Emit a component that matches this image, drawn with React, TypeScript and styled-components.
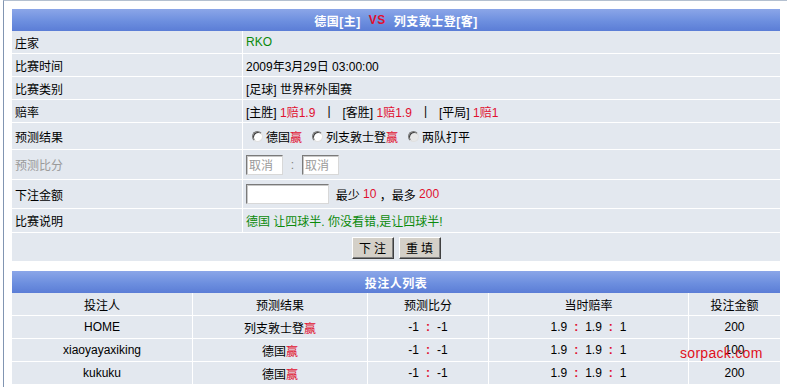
import React, { FC } from 'react';
import styled, { createGlobalStyle } from 'styled-components';

const GlobalStyle = createGlobalStyle`
  body {
    margin: 0;
    background: #fff;
    font-family: 'Liberation Sans', 'Noto Sans CJK SC', sans-serif;
    font-size: 12px;
    color: #000;
  }
`;

const Colors = {
  Cell: '#e3e8ef',
  Red: '#e0102f',
  Green: '#0b8a0b',
  Muted: '#9a9a9a',
};

const Frame = styled.div`
  position: relative;
  margin-left: 3px;
  min-height: 386px;
  border-left: 1px solid #8195b2;
  border-top: 1px solid #b4c0d0;
  padding: 8px 0 0 8px;
`;

const Panel = styled.div`
  width: 768px;
  background: #fff;
`;

const Header = styled.div<{ $h: number }>`
  height: ${({ $h }) => $h}px;
  display: flex;
  align-items: center;
  justify-content: center;
  background: linear-gradient(#8ba6e8, #6d8fdf 55%, #5b7dd6);
  color: #fff;
  font-weight: bold;
  letter-spacing: 0.5px;
`;

const Vs = styled.span`
  color: ${Colors.Red};
  margin: 0 8px;
`;

const Row = styled.div<{ $h: number }>`
  box-sizing: border-box;
  display: grid;
  grid-template-columns: 230px 1fr;
  column-gap: 1px;
  height: ${({ $h }) => $h}px;
  border-bottom: 1px solid #fff;
`;

const Label = styled.div<{ $muted?: boolean }>`
  background: ${Colors.Cell};
  display: flex;
  align-items: center;
  padding-left: 3px;
  color: ${({ $muted }) => ($muted ? Colors.Muted : '#000')};
`;

const Value = styled.div`
  background: ${Colors.Cell};
  display: flex;
  align-items: center;
  padding-left: 3px;
  white-space: pre;
`;

const Red = styled.span`
  color: ${Colors.Red};
`;

const Green = styled.span`
  color: ${Colors.Green};
`;

const Pipe = styled.span`
  margin: 0 12px;
`;

const RadioItem = styled.label`
  display: flex;
  align-items: center;
  gap: 3px;
  margin: 0 4px 0 6px;
`;

const RadioDot = styled.span<{ $dim?: boolean }>`
  box-sizing: border-box;
  width: 11px;
  height: 11px;
  border-radius: 50%;
  background: ${({ $dim }) => ($dim ? '#e8e8e8' : '#fff')};
  border: 1px solid;
  border-color: #7a7a7a #e0e0e0 #e0e0e0 #7a7a7a;
  box-shadow: inset 1px 1px 0 #404040;
`;

const TextBox = styled.input<{ $w: number }>`
  box-sizing: border-box;
  width: ${({ $w }) => $w}px;
  height: 20px;
  margin: 0;
  padding: 0 2px;
  background: #fff;
  border: 1px solid;
  border-color: #7a7a7a #d8d8d8 #d8d8d8 #7a7a7a;
  box-shadow: inset 1px 1px 0 #c8c8c8;
  font-family: inherit;
  font-size: 12px;
  color: ${Colors.Muted};
  outline: none;
`;

const Colon = styled.span`
  width: 19px;
  text-align: center;
  color: #808080;
`;

const ButtonRow = styled.div`
  height: 28px;
  background: ${Colors.Cell};
  display: flex;
  align-items: center;
  justify-content: center;
  gap: 5px;
  padding-top: 1px;
  box-sizing: border-box;
`;

const Button = styled.button`
  width: 42px;
  height: 22px;
  padding: 0;
  background: #d4d0c8;
  border: 1px solid;
  border-color: #fff #404040 #404040 #fff;
  box-shadow: inset -1px -1px 0 #808080;
  font-family: inherit;
  font-size: 12px;
  letter-spacing: 3px;
  text-indent: 3px;
  color: #000;
`;

const ListPanel = styled(Panel)`
  margin-top: 10px;
`;

const ListRow = styled.div<{ $h: number }>`
  box-sizing: border-box;
  display: grid;
  grid-template-columns: 180px 174px 120px 199px 1fr;
  column-gap: 1px;
  height: ${({ $h }) => $h}px;
  border-bottom: 1px solid #fff;
`;

const ListCell = styled.div`
  background: ${Colors.Cell};
  display: flex;
  align-items: center;
  justify-content: center;
  white-space: pre;
`;

const Sep = styled.b`
  color: ${Colors.Red};
  margin: 0 7px;
`;

const Watermark = styled.div`
  position: absolute;
  left: 676px;
  top: 344px;
  color: #e01020;
  font-family: 'Liberation Sans', sans-serif;
  font-size: 14px;
  letter-spacing: 0.3px;
`;

interface Bet {
  name: string;
  pick: string;
  amount: number;
}

const bets: Bet[] = [
  { name: 'HOME', pick: '列支敦士登', amount: 200 },
  { name: 'xiaoyayaxiking', pick: '德国', amount: 100 },
  { name: 'kukuku', pick: '德国', amount: 200 },
];

const App: FC = () => (
  <>
    <GlobalStyle />
    <Frame>
      <Panel>
        <Header $h={22}>
          德国[主]<Vs>VS</Vs>列支敦士登[客]
        </Header>
        <Row $h={23}>
          <Label>庄家</Label>
          <Value>
            <Green>RKO</Green>
          </Value>
        </Row>
        <Row $h={23}>
          <Label>比赛时间</Label>
          <Value>2009年3月29日 03:00:00</Value>
        </Row>
        <Row $h={23}>
          <Label>比赛类别</Label>
          <Value>[足球] 世界杯外围赛</Value>
        </Row>
        <Row $h={23}>
          <Label>赔率</Label>
          <Value>
            [主胜] <Red>1赔1.9</Red>
            <Pipe>|</Pipe>[客胜] <Red>1赔1.9</Red>
            <Pipe>|</Pipe>[平局] <Red>1赔1</Red>
          </Value>
        </Row>
        <Row $h={27}>
          <Label>预测结果</Label>
          <Value>
            <RadioItem>
              <RadioDot />
              <span>
                德国<Red>赢</Red>
              </span>
            </RadioItem>
            <RadioItem>
              <RadioDot />
              <span>
                列支敦士登<Red>赢</Red>
              </span>
            </RadioItem>
            <RadioItem>
              <RadioDot $dim />
              <span>两队打平</span>
            </RadioItem>
          </Value>
        </Row>
        <Row $h={30}>
          <Label $muted>预测比分</Label>
          <Value>
            <TextBox $w={37} value="取消" readOnly />
            <Colon>:</Colon>
            <TextBox $w={37} value="取消" readOnly />
          </Value>
        </Row>
        <Row $h={29}>
          <Label>下注金额</Label>
          <Value>
            <TextBox $w={83} value="" readOnly />
            {'  最少 '}
            <Red>10</Red>
            {' ，最多 '}
            <Red>200</Red>
          </Value>
        </Row>
        <Row $h={24}>
          <Label>比赛说明</Label>
          <Value>
            <Green>德国 让四球半. 你没看错,是让四球半!</Green>
          </Value>
        </Row>
        <ButtonRow>
          <Button>下注</Button>
          <Button>重填</Button>
        </ButtonRow>
      </Panel>

      <ListPanel>
        <Header $h={22}>投注人列表</Header>
        <ListRow $h={23}>
          <ListCell>投注人</ListCell>
          <ListCell>预测结果</ListCell>
          <ListCell>预测比分</ListCell>
          <ListCell>当时赔率</ListCell>
          <ListCell>投注金额</ListCell>
        </ListRow>
        {bets.map((bet) => (
          <ListRow $h={23} key={bet.name}>
            <ListCell>{bet.name}</ListCell>
            <ListCell>
              {bet.pick}
              <Red>赢</Red>
            </ListCell>
            <ListCell>
              -1<Sep>:</Sep>-1
            </ListCell>
            <ListCell>
              1.9<Sep>:</Sep>1.9<Sep>:</Sep>1
            </ListCell>
            <ListCell>{bet.amount}</ListCell>
          </ListRow>
        ))}
      </ListPanel>
      <Watermark>sorpack.com</Watermark>
    </Frame>
  </>
);

export default App;
